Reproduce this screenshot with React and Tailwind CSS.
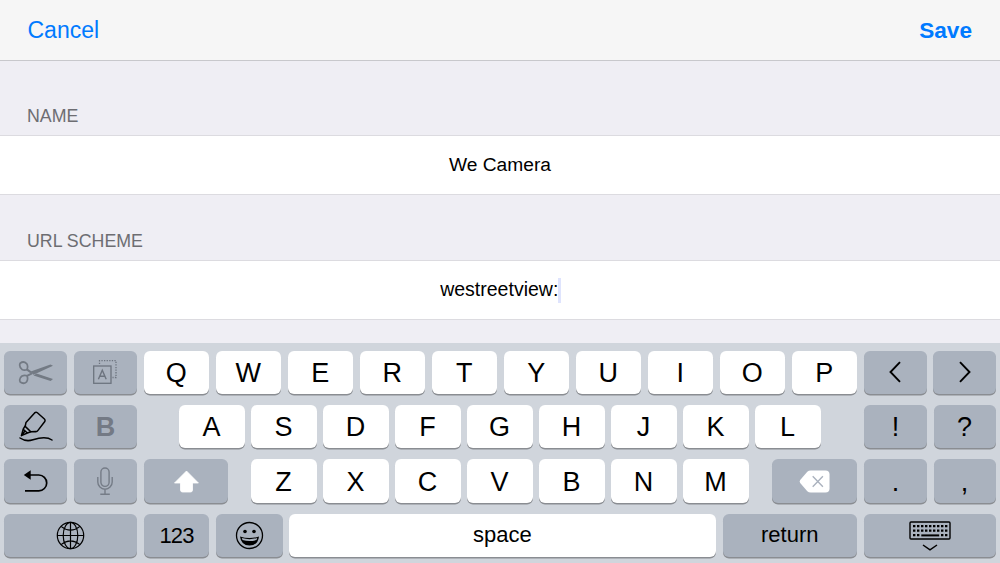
import React from 'react';

const Key = ({ className = '', light = false, color = 'text-black', children }) => (
  <div
    className={`flex h-[43.5px] shrink-0 items-center justify-center rounded-[6px] text-[27px] leading-none shadow-[0_1.4px_0_#8a8d92] ${color} ${light ? 'bg-white' : 'bg-[#aab2be]'} ${className}`}
  >
    {children}
  </div>
);

const Letters = ({ text }) => (
  <div className="flex gap-[6.5px]">
    {text.split('').map((letter) => (
      <Key key={letter} light className="w-[65.5px] pt-[2px] pr-px">
        {letter}
      </Key>
    ))}
  </div>
);

const ScissorsIcon = () => (
  <svg className="mt-px" width="36" height="26" viewBox="0 0 36 26" fill="none" stroke="#737a84" strokeWidth="1.7" strokeLinejoin="round">
    <path d="M2.2 3.2Q5.6.6 8.6 3.6 10.4 6.2 9 9.4 6.6 10.8 4 9.4 .6 6.6 2.2 3.2Z" />
    <path d="M2.2 22Q5.6 24.6 8.6 21.8 10.4 19 9 15.8 6.6 14.8 4 16 .6 18.6 2.2 22Z" />
    <path d="M8.8 9.4 13 12.4M9 15.8 14 13.4" strokeWidth="2" />
    <path d="M12 11.8 32.5 4.4 35 5.8 15.5 14.8Z" fill="#737a84" stroke="none" />
    <path d="M18.5 13.6 35 19 32.6 20.9 15.5 15.4Z" fill="#737a84" stroke="none" />
  </svg>
);

const SelectAllIcon = () => (
  <svg width="26" height="26" viewBox="0 0 26 26" fill="none" stroke="#6d747f">
    <rect x="1.7" y="7" width="17.3" height="17.3" strokeWidth="1.3" />
    <path d="M7.5 5V1.7H24V18.5H20.5" strokeWidth="1.3" strokeDasharray="1.3 1.3" />
    <path d="M6.4 20.3 10.3 11.2 14.2 20.3M7.7 17.2H12.9" strokeWidth="1.4" />
  </svg>
);

const MarkerIcon = () => (
  <svg width="36" height="32" viewBox="0 0 36 32" fill="none" stroke="#000" strokeWidth="1.5" strokeLinejoin="round" strokeLinecap="round">
    <path d="M16.6 1.9Q18 .6 19.4 1.8L26.4 8Q27.6 9.2 26.6 10.8L20 19.4Q19 20.8 17.4 20.6L12.8 20.8 7.2 15.4 8 11.4Z" />
    <path d="M7 15.2 5.2 18.2 9.4 22 12.8 20.8M5.2 18.2 3.4 24.6 9.4 22M3.4 24.6 6.8 20.2" />
    <path d="M2 27C6 29.8 10 30.4 15 28.8 21 26.8 28 24.8 34 29" />
  </svg>
);

const UndoIcon = () => (
  <svg width="26" height="24" viewBox="0 0 26 24" fill="none">
    <path d="M4 6H15.8A7.9 7.9 0 0 1 15.8 21.8H2" stroke="#000" strokeWidth="1.7" />
    <path d="M.8 6 7.7 1.3V10.7Z" fill="#000" />
  </svg>
);

const MicIcon = () => (
  <svg width="18" height="28" viewBox="0 0 18 28" fill="none" stroke="#757c87" strokeWidth="1.4">
    <rect x="4.9" y="1" width="8.2" height="18.4" rx="4.1" />
    <path d="M1.8 10V15A7.2 7.2 0 0 0 16.2 15V10M9 22V27M4.3 27.2H13.8" />
  </svg>
);

const GlobeIcon = () => (
  <svg width="29" height="29" viewBox="0 0 29 29" fill="none" stroke="#000" strokeWidth="1.2">
    <circle cx="14.5" cy="14.5" r="13.2" />
    <ellipse cx="14.5" cy="14.5" rx="7.3" ry="13.2" />
    <path d="M14.5 1V28M1 14.5H28M5 5.4Q14.5 13 24 5.4M5 23.6Q14.5 16 24 23.6" />
  </svg>
);

const SmileIcon = () => (
  <svg width="29" height="29" viewBox="0 0 29 29" fill="none">
    <circle cx="14.5" cy="14.5" r="13" stroke="#000" strokeWidth="1.3" />
    <circle cx="10" cy="10.5" r="1.8" fill="#000" />
    <circle cx="19" cy="10.5" r="1.8" fill="#000" />
    <path d="M5 15.4Q14.5 18.6 24 15.4Q22.9 24.4 14.5 24.4T5 15.4Z" fill="#000" />
    <path d="M6.8 17Q14.5 19.3 22.2 17L21.5 19.1Q14.5 21.1 7.5 19.1Z" fill="#aab2be" />
  </svg>
);

const ShiftIcon = () => (
  <svg width="27" height="23" viewBox="0 0 27 23">
    <path d="M13.5 1 25.4 13H19.5V20Q19.5 22 17.5 22H9.5Q7.5 22 7.5 20V13H1.5Z" fill="#fff" stroke="#fff" strokeWidth=".8" strokeLinejoin="round" />
  </svg>
);

const DeleteIcon = () => (
  <svg width="31" height="23" viewBox="0 0 31 23" fill="none">
    <path d="M8.3 1.8Q9.7.4 11.7.4H26.5Q30.5.4 30.5 4.4V18.6Q30.5 22.6 26.5 22.6H11.7Q9.7 22.6 8.3 21.2L1.2 13Q0 11.5 1.2 10Z" fill="#fff" />
    <path d="M13.7 6.3 23.9 16.7M23.9 6.3 13.7 16.7" stroke="#aab2be" strokeWidth="1.4" />
  </svg>
);

const KeyboardIcon = () => (
  <svg className="mt-[3px]" width="42" height="31" viewBox="0 0 42 31" fill="none" stroke="#000">
    <rect x="1" y="1" width="40" height="17" rx="1" strokeWidth="1.4" />
    <path d="M4 5.2H38.5M4 9.6H38.5" strokeWidth="2.3" strokeDasharray="2.4 1.6" />
    <path d="M4 14.2H10.6M32 14.2H38.6" strokeWidth="2.3" strokeDasharray="2.4 1.6" />
    <path d="M12.3 14.4H30.2" strokeWidth="2" />
    <path d="M14 24 21 28.9 28 24" strokeWidth="1.5" />
  </svg>
);

const Chevron = ({ d }) => (
  <svg width="14" height="22" viewBox="0 0 14 22" fill="none" stroke="#000" strokeWidth="1.9">
    <path d={d} />
  </svg>
);

const App = () => {
  return (
    <div className="flex h-[563px] w-[1000px] flex-col overflow-hidden bg-[#efeef4] font-['Liberation_Sans',Arial,sans-serif] text-black">
      <header className="flex h-[61px] shrink-0 items-center justify-between border-b border-[#c8c8cc] bg-[#f6f6f6] pt-px pr-[28px] pl-[27.5px] text-[23px] text-[#007aff]">
        <button>Cancel</button>
        <button className="text-[22.6px] font-bold">Save</button>
      </header>

      <div className="flex h-[74px] shrink-0 items-end pb-[5px] pl-[27px] text-[17.8px] text-[#6d6d72]">NAME</div>
      <div className="flex h-[60px] shrink-0 items-center justify-center border-y border-[#dcdbe0] bg-white text-[19.2px]">
        We Camera
      </div>

      <div className="flex h-[65px] shrink-0 items-end pb-[5px] pl-[27px] text-[17.8px] text-[#6d6d72]">URL SCHEME</div>
      <div className="flex h-[60px] shrink-0 items-center justify-center border-y border-[#dcdbe0] bg-white pl-px text-[19.5px]">
        westreetview:
        <span className="h-[25px] w-[2.5px] bg-[#dfe4fd]" />
      </div>

      <div className="mt-[23px] flex grow flex-col gap-[10.8px] bg-[#d0d5dc] pt-[7.7px] pr-[4.3px] pl-[4.3px]">
        <div className="flex justify-between">
          <Key className="w-[62.5px]"><ScissorsIcon /></Key>
          <Key className="w-[63.2px]"><SelectAllIcon /></Key>
          <Letters text="QWERTYUIOP" />
          <Key className="w-[62.2px]"><Chevron d="M12 1.2 2.5 11 12 20.8" /></Key>
          <Key className="w-[62.2px]"><Chevron d="M2 1.2 11.5 11 2 20.8" /></Key>
        </div>

        <div className="flex">
          <Key className="w-[62.5px]"><MarkerIcon /></Key>
          <Key className="ml-[7px] w-[63.2px] pt-[2px] font-bold" color="text-[#747a85]">B</Key>
          <div className="ml-[42.2px]"><Letters text="ASDFGHJKL" /></div>
          <Key className="ml-auto w-[62.2px] pt-[2px]">!</Key>
          <Key className="ml-[7px] w-[62.2px] pt-[2px]">?</Key>
        </div>

        <div className="flex">
          <Key className="w-[62.5px]"><UndoIcon /></Key>
          <Key className="ml-[7px] w-[63.2px]"><MicIcon /></Key>
          <Key className="ml-[7px] w-[84.3px]"><ShiftIcon /></Key>
          <div className="ml-[23px]"><Letters text="ZXCVBNM" /></div>
          <Key className="ml-auto w-[85.3px]"><DeleteIcon /></Key>
          <Key className="ml-[7.2px] w-[62.2px] pt-[2px]">.</Key>
          <Key className="ml-[7px] w-[62.2px] pt-[2px]">,</Key>
        </div>

        <div className="flex justify-between">
          <Key className="w-[132.7px]"><GlobeIcon /></Key>
          <Key className="w-[65.3px]"><span className="pt-[2px] text-[22px] tracking-[-0.8px]">123</span></Key>
          <Key className="w-[66.3px]"><SmileIcon /></Key>
          <Key light className="w-[426.7px]"><span className="pr-px pb-[1px] text-[22px]">space</span></Key>
          <Key className="w-[134.2px]"><span className="pr-px pb-[1px] text-[22px]">return</span></Key>
          <Key className="w-[131.4px]"><KeyboardIcon /></Key>
        </div>
      </div>
    </div>
  );
};

export default App;
